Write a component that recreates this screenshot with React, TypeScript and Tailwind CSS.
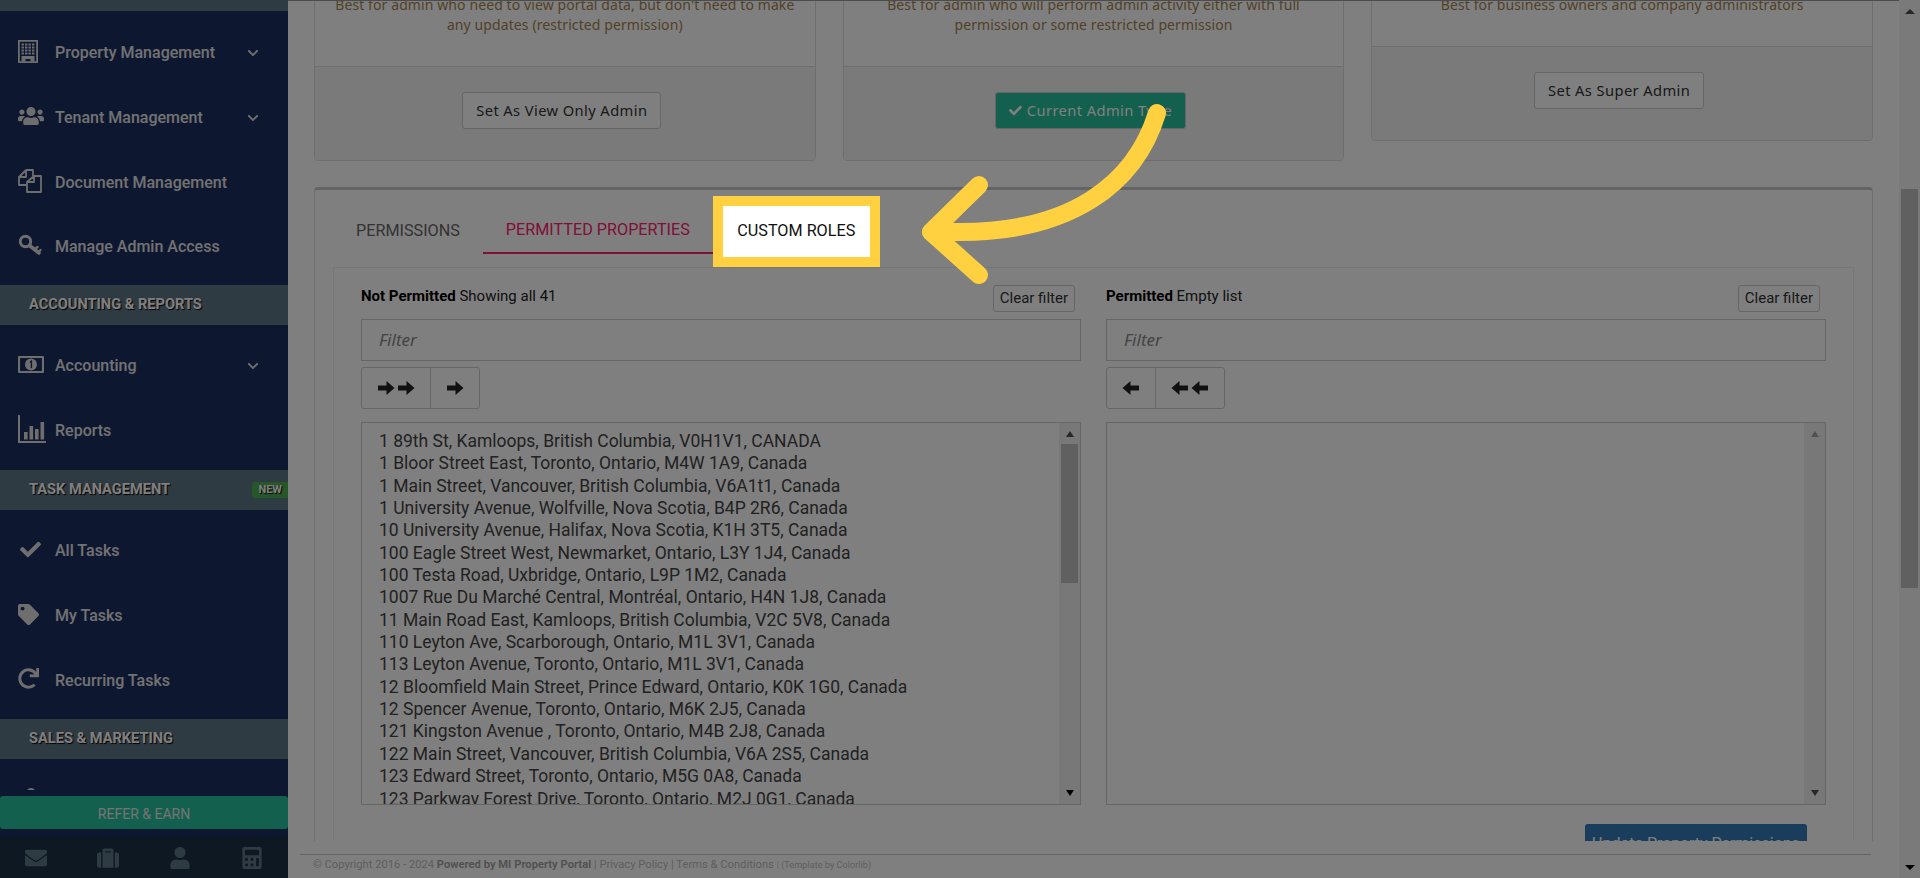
import type { ReactNode } from "react";
import {
  FaUsers,
  FaChevronDown,
  FaCheck,
  FaTag,
  FaRedo,
  FaEnvelope,
  FaSuitcase,
  FaUser,
  FaCalculator,
} from "react-icons/fa";

const notPermitted = [
  "1 89th St, Kamloops, British Columbia, V0H1V1, CANADA",
  "1 Bloor Street East, Toronto, Ontario, M4W 1A9, Canada",
  "1 Main Street, Vancouver, British Columbia, V6A1t1, Canada",
  "1 University Avenue, Wolfville, Nova Scotia, B4P 2R6, Canada",
  "10 University Avenue, Halifax, Nova Scotia, K1H 3T5, Canada",
  "100 Eagle Street West, Newmarket, Ontario, L3Y 1J4, Canada",
  "100 Testa Road, Uxbridge, Ontario, L9P 1M2, Canada",
  "1007 Rue Du Marché Central, Montréal, Ontario, H4N 1J8, Canada",
  "11 Main Road East, Kamloops, British Columbia, V2C 5V8, Canada",
  "110 Leyton Ave, Scarborough, Ontario, M1L 3V1, Canada",
  "113 Leyton Avenue, Toronto, Ontario, M1L 3V1, Canada",
  "12 Bloomfield Main Street, Prince Edward, Ontario, K0K 1G0, Canada",
  "12 Spencer Avenue, Toronto, Ontario, M6K 2J5, Canada",
  "121 Kingston Avenue , Toronto, Ontario, M4B 2J8, Canada",
  "122 Main Street, Vancouver, British Columbia, V6A 2S5, Canada",
  "123 Edward Street, Toronto, Ontario, M5G 0A8, Canada",
  "123 Parkway Forest Drive, Toronto, Ontario, M2J 0G1, Canada",
];

/* outline icons from the old icon font, drawn by hand */
function BuildingIcon() {
  const windows = [3.5, 7, 10.5, 14];
  return (
    <svg viewBox="0 0 20 23" className="h-[23px] w-[20px]" fill="currentColor">
      <path fillRule="evenodd" d="M0 0h20v23H0zM1.8 1.8v19.4h16.4V1.8z" />
      {[3.5, 6.5, 9.5, 12.5].map((y) =>
        windows.map((x) => <rect key={`${x}-${y}`} x={x} y={y} width="2.4" height="2" />),
      )}
      <path d="M3.5 16h13v5.5h-4V19h-5v2.5h-4z" />
    </svg>
  );
}

function FilesIcon() {
  return (
    <svg viewBox="0 0 24 24" className="h-[24px] w-[24px]" fill="none" stroke="currentColor" strokeWidth="1.8" strokeLinejoin="round">
      <path d="M8 1h7v6M8 1 1 8v8h8M8 1v7H1" />
      <path d="M16 7h7v16H9V13zM16 7v6H9" />
    </svg>
  );
}

function KeyIcon() {
  return (
    <svg viewBox="0 0 24 22" className="h-[22px] w-[24px]" fill="none" stroke="currentColor" strokeLinecap="round">
      <circle cx="7.5" cy="7.5" r="5.2" strokeWidth="3" />
      <path d="M11.5 11.5 21 19" strokeWidth="3.6" />
      <path d="m16.5 15.5 3-2.5M20 18.5l2.5-2.5" strokeWidth="2.4" />
    </svg>
  );
}

function MoneyIcon() {
  return (
    <svg viewBox="0 0 26 17" className="h-[17px] w-[26px]">
      <rect x="1" y="1" width="24" height="15" rx="0.5" fill="none" stroke="currentColor" strokeWidth="2.2" />
      <circle cx="13" cy="8.5" r="6" fill="currentColor" />
      <path d="M12 6.2l1.4-1v7" fill="none" stroke="#1c2e60" strokeWidth="1.4" />
    </svg>
  );
}

function ChartIcon() {
  return (
    <svg viewBox="0 0 28 28" className="h-[28px] w-[28px]" fill="currentColor">
      <path d="M0 0h2v26h26v2H0z" />
      <rect x="6" y="17" width="3.6" height="7.5" />
      <rect x="11.5" y="11" width="3.6" height="13.5" />
      <rect x="17" y="14" width="3.6" height="10.5" />
      <rect x="22.5" y="7" width="3.6" height="17.5" />
    </svg>
  );
}

function NavItem({ icon, label, chevron }: { icon: ReactNode; label: string; chevron?: boolean }) {
  return (
    <div className="flex h-[64.7px] items-center pl-[18px] pr-[29px] text-[16px] font-medium text-[#e4e4e4]">
      <span className="flex w-[37px] shrink-0 items-center pb-[4px] text-[#dcdcdc]">{icon}</span>
      <span>{label}</span>
      {chevron && <FaChevronDown className="ml-auto text-[12px] text-[#dcdcdc]" />}
    </div>
  );
}

function NavHeader({ label, badge }: { label: string; badge?: boolean }) {
  return (
    <div className="flex h-[40px] items-center bg-[#5f7687] pl-[29px] text-[14.6px] font-bold text-white [text-shadow:1px_1px_1px_#000]">
      <span>{label}</span>
      {badge && (
        <span className="ml-auto rounded-l-[3px] bg-[#4caf50] px-[6px] py-[1px] text-[11px] leading-[14px]">NEW</span>
      )}
    </div>
  );
}

function Sidebar() {
  return (
    <aside className="flex h-full w-[288px] shrink-0 flex-col bg-[#1c2e60] font-['Roboto',sans-serif]">
      <div className="h-[11px] shrink-0 bg-[#5f7687]" />
      <div className="flex h-[779px] shrink-0 flex-col overflow-hidden">
        <div className="pt-[10px]">
          <NavItem icon={<BuildingIcon />} label="Property Management" chevron />
          <NavItem icon={<FaUsers className="text-[26px]" />} label="Tenant Management" chevron />
          <NavItem icon={<FilesIcon />} label="Document Management" />
          <NavItem icon={<KeyIcon />} label="Manage Admin Access" />
        </div>
        <div className="mt-[5px]">
          <NavHeader label="ACCOUNTING & REPORTS" />
        </div>
        <div className="pt-[9px]">
          <NavItem icon={<MoneyIcon />} label="Accounting" chevron />
          <NavItem icon={<ChartIcon />} label="Reports" />
        </div>
        <div className="mt-[7px]">
          <NavHeader label="TASK MANAGEMENT" badge />
        </div>
        <div className="pt-[9px]">
          <NavItem icon={<FaCheck className="ml-[2px] text-[21px]" />} label="All Tasks" />
          <NavItem icon={<FaTag className="text-[21px]" />} label="My Tasks" />
          <NavItem icon={<FaRedo className="text-[21px]" />} label="Recurring Tasks" />
        </div>
        <div className="mt-[6px]">
          <NavHeader label="SALES & MARKETING" />
        </div>
        <div className="pl-[18px] pt-[25px] text-[#dcdcdc]">
          <FaUsers className="text-[26px]" />
        </div>
      </div>
      <div className="mt-[6px] flex h-[33px] shrink-0 items-center justify-center rounded-[3px] bg-[#26c09c] pt-[4px] text-[14px] text-[#e8e8e8]">
        REFER &amp; EARN
      </div>
      <div className="mt-[8px] grid flex-1 grid-cols-4 items-center justify-items-center bg-[#1c3044] text-[22px] text-[#5f7687]">
        <FaEnvelope />
        <FaSuitcase />
        <FaUser />
        <FaCalculator />
      </div>
    </aside>
  );
}

function AdminCard({ lines, children }: { lines: string[]; children: ReactNode }) {
  return (
    <div className="rounded-[4px] border border-[#dddddd]">
      <div className="px-[10px] pb-[31px] text-center font-['Noto_Sans',sans-serif] text-[14px] leading-[20px] tracking-[0.1px] text-[#a5824f]">
        {lines.map((l) => (
          <p key={l}>{l}</p>
        ))}
      </div>
      <div className="flex h-[94px] justify-center rounded-b-[4px] border-t border-[#dddddd] bg-[#f5f5f5] pr-[6px] pt-[25px]">
        {children}
      </div>
    </div>
  );
}

const cardBtn =
  "h-[37px] rounded-[3px] border border-[#cccccc] bg-white px-[13px] font-['Noto_Sans',sans-serif] text-[14.7px] tracking-[0.4px]";

function ArrowGlyph({ left }: { left?: boolean }) {
  return (
    <svg viewBox="0 0 18 16" className={`h-[16px] w-[18px] fill-[#222] ${left ? "-scale-x-100" : ""}`}>
      <path d="M9.5 1l8 7-8 7v-4.5H1v-5h8.5z" />
    </svg>
  );
}

function DualList({ title, note, rows, left }: { title: string; note: string; rows: string[]; left?: boolean }) {
  const moveAll = (
    <span className="flex gap-[2px] px-[15px]">
      <ArrowGlyph left={left} />
      <ArrowGlyph left={left} />
    </span>
  );
  const moveOne = (
    <span className="flex px-[15px]">
      <ArrowGlyph left={left} />
    </span>
  );
  return (
    <div className="min-w-0">
      <div className="flex h-[27px] items-start justify-between">
        <p className="pt-[3px] text-[15px] leading-[16px] text-[#222]">
          <b className="text-black">{title}</b> {note}
        </p>
        <button className="mr-[6px] h-[27px] rounded-[3px] border border-[#cccccc] bg-white px-[6px] text-[15px] leading-none text-[#333]">
          Clear filter
        </button>
      </div>
      <div className="mt-[7px] flex h-[42px] items-center border border-[#cccccc] bg-white pl-[17px] font-['Noto_Sans',sans-serif] text-[17px] italic text-[#888]">
        Filter
      </div>
      <div className="mt-[6px] flex h-[42px] w-fit items-center divide-x divide-[#cccccc] rounded-[3px] border border-[#cccccc] bg-white [&>span]:h-full [&>span]:items-center">
        {left ? moveOne : moveAll}
        {left ? moveAll : moveOne}
      </div>
      <div className="mt-[13px] flex h-[383px] border border-[#cccccc] bg-white">
        <div className="min-w-0 flex-1 overflow-hidden pl-[17px] pt-[7px] text-[17.5px] leading-[22.35px] text-[#444]">
          {rows.map((r) => (
            <div key={r} className="whitespace-nowrap">
              {r}
            </div>
          ))}
        </div>
        <div className="flex w-[21px] shrink-0 flex-col items-center bg-[#f1f1f1] pt-[8px]">
          <span className={`h-0 w-0 border-x-[4px] border-b-[6px] border-x-transparent ${rows.length ? "border-b-[#505050]" : "border-b-[#a3a3a3]"}`} />
          {rows.length > 0 && <div className="mt-[7px] h-[139px] w-[17px] bg-[#c1c1c1]" />}
          <span className={`mt-auto mb-[8px] h-0 w-0 border-x-[4px] border-t-[6px] border-x-transparent ${rows.length ? "border-t-[#000]" : "border-t-[#505050]"}`} />
        </div>
      </div>
    </div>
  );
}

export default function App() {
  return (
    <div className="relative flex h-[878px] w-[1920px] overflow-hidden bg-white font-['Roboto',sans-serif]">
      <Sidebar />

      <main className="flex min-w-0 flex-1 flex-col border-t border-[#999]">
        <div className="h-[840px] shrink-0 overflow-hidden px-[26px]">
          <div className="-mt-[7px] grid grid-cols-3 items-start gap-[27px]">
            <AdminCard lines={["Best for admin who need to view portal data, but don't need to make", "any updates (restricted permission)"]}>
              <button className={`${cardBtn} text-[#333]`}>Set As View Only Admin</button>
            </AdminCard>
            <AdminCard lines={["Best for admin who will perform admin activity either with full", "permission or some restricted permission"]}>
              <button className={`${cardBtn} flex items-center gap-[5px] border-[#1fb98f] !bg-[#26c09c] text-white`}>
                <FaCheck className="text-[13px]" /> Current Admin Type
              </button>
            </AdminCard>
            <AdminCard lines={["Best for business owners and company administrators"]}>
              <button className={`${cardBtn} text-[#333]`}>Set As Super Admin</button>
            </AdminCard>
          </div>

          <section className="mt-[26px] rounded-[4px] border border-t-[3px] border-[#dddddd] border-t-[#c8c8c8] px-[18px]">
            <div className="flex h-[77px] items-start pt-[16px] text-[16.2px]">
              <div className="flex h-[48px] items-center px-[23px] pt-[2px] text-[#666]">PERMISSIONS</div>
              <div className="flex h-[48px] items-center border-b-2 border-[#ff2070] px-[23px] pt-[2px] text-[#ff2070]">PERMITTED PROPERTIES</div>
              <div className="relative z-20 ml-[10px] flex h-[51px] w-[147px] items-center justify-center bg-white text-[#111] outline-[10px] outline-[#ffd040]">
                CUSTOM ROLES
              </div>
            </div>
            <div className="border border-[#eeeeee] px-[27px] pt-[17px]">
              <div className="grid grid-cols-2 gap-[25px]">
                <DualList title="Not Permitted" note="Showing all 41" rows={notPermitted} />
                <DualList title="Permitted" note="Empty list" rows={[]} left />
              </div>
              <div className="mt-[19px] flex justify-end pr-[19px]">
                <button className="h-[40px] w-[222px] rounded-[3px] bg-[#337ab7] text-[16px] text-white">Update Property Permissions</button>
              </div>
            </div>
          </section>
        </div>
        <footer className="ml-[12px] mr-[28px] mt-[13px] flex-1 border-t border-[#c8c8c8] pl-[13px] pt-[2px] text-[11.2px] text-[#bcbcbc]">
          © Copyright 2016 - 2024 <b className="text-[#a4a4a4]">Powered by MI Property Portal</b> | Privacy Policy | Terms &amp; Conditions{" "}
          <span className="text-[9.2px]">| (Template by Colorlib)</span>
        </footer>
      </main>

      <div className="flex h-full w-[21px] shrink-0 flex-col items-center bg-[#f4f4f4] pt-[9px]">
        <span className="h-0 w-0 border-x-[5px] border-b-[5px] border-x-transparent border-b-[#505050]" />
        <div className="mt-[175px] h-[399px] w-[17px] bg-[#c1c1c1]" />
        <span className="mt-auto mb-[8px] h-0 w-0 border-x-[5px] border-t-[5px] border-x-transparent border-t-[#000]" />
      </div>

      {/* walkthrough dim layer, the active tab sits above it */}
      <div className="absolute inset-0 z-10 bg-black/50" />
      <svg viewBox="0 0 1920 878" className="pointer-events-none absolute inset-0 z-20 h-[878px] w-[1920px]" fill="none" stroke="#ffd040" strokeWidth="18" strokeLinecap="round" strokeLinejoin="round">
        <path d="M1157 113C1135 185 1070 232 960 232L931 232" />
        <path d="M979 185L931 232L979 275" />
      </svg>
    </div>
  );
}
